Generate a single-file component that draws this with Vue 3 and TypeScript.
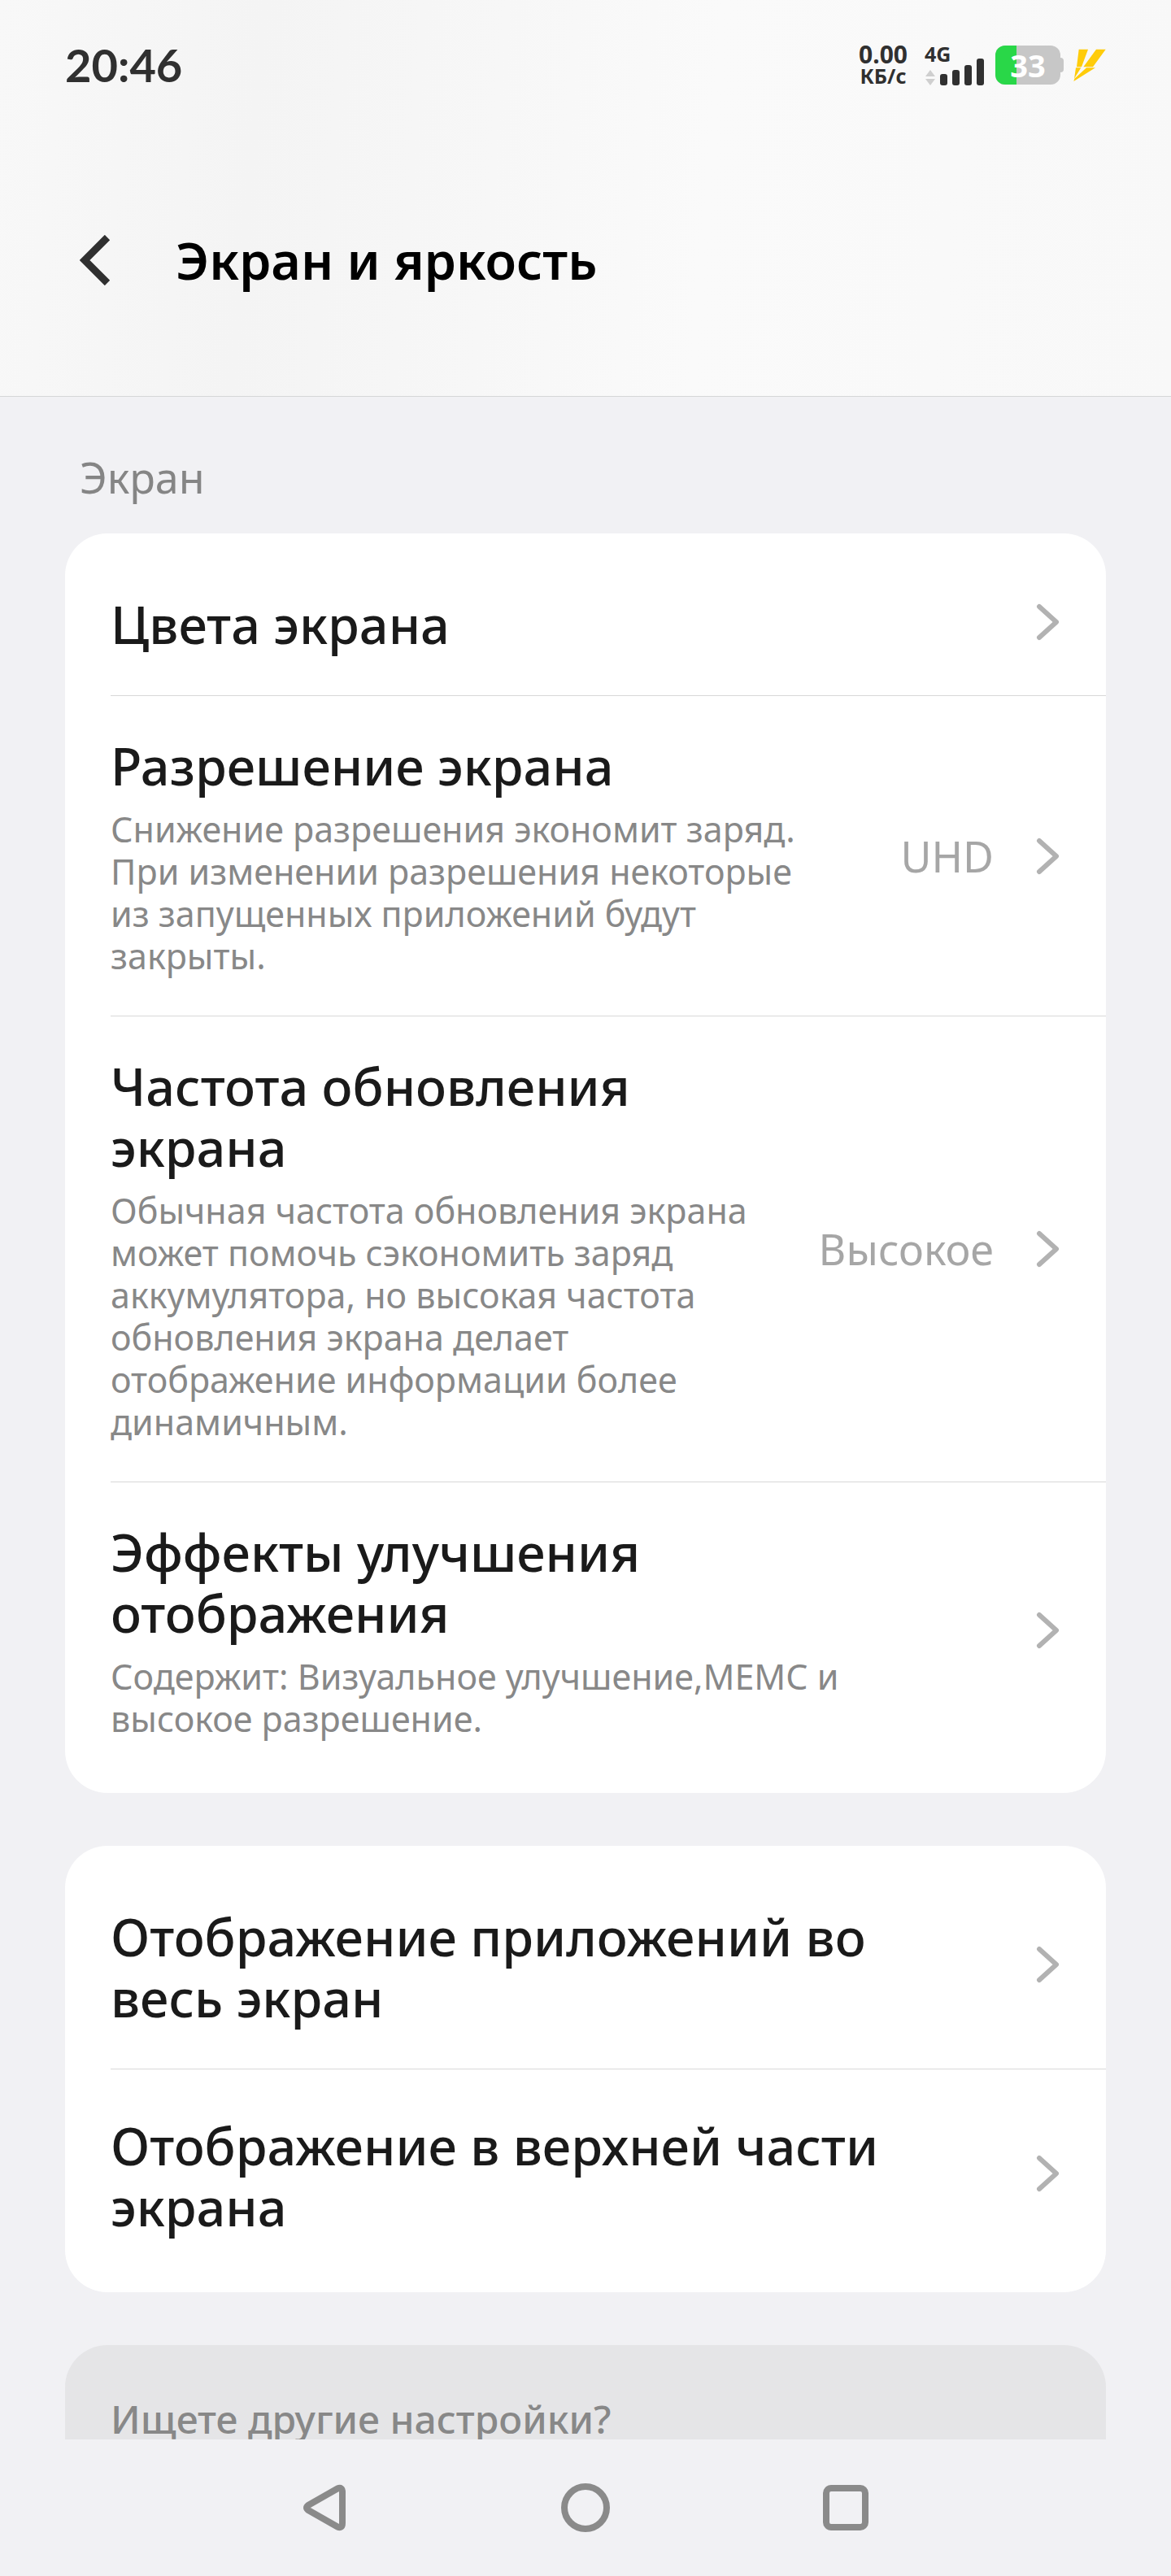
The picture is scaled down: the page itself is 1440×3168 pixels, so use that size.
<script setup lang="ts">
interface SettingRow {
  title: string
  note?: string
  value?: string
}

const groups: SettingRow[][] = [
  [
    { title: 'Цвета экрана' },
    {
      title: 'Разрешение экрана',
      note: 'Снижение разрешения экономит заряд. При изменении разрешения некоторые из запущенных приложений будут закрыты.',
      value: 'UHD',
    },
    {
      title: 'Частота обновления экрана',
      note: 'Обычная частота обновления экрана может помочь сэкономить заряд аккумулятора, но высокая частота обновления экрана делает отображение информации более динамичным.',
      value: 'Высокое',
    },
    {
      title: 'Эффекты улучшения отображения',
      note: 'Содержит: Визуальное улучшение,MEMC и высокое разрешение.',
    },
  ],
  [{ title: 'Отображение приложений во весь экран' }, { title: 'Отображение в верхней части экрана' }],
]

const batteryLevel = 33
</script>

<template>
  <div class="screen">
    <header class="header">
      <div class="status">
        <time class="clock">20:46</time>
        <div class="indicators">
          <div class="speed">
            <span class="speed-value">0.00</span>
            <span class="speed-unit">КБ/с</span>
          </div>
          <div class="network">
            <span class="network-type">4G</span>
            <svg class="signal" width="73" height="34" viewBox="0 0 73 34" aria-hidden="true">
              <path d="M7 15l6 8H1zM7 34l6-8H1z" fill="#cfcfcf" />
              <g fill="#303030">
                <rect x="19" y="20" width="9" height="14" rx="3" />
                <rect x="34" y="15" width="9" height="19" rx="3" />
                <rect x="49" y="9" width="9" height="25" rx="3" />
                <rect x="64" y="1" width="9" height="33" rx="3" />
              </g>
            </svg>
          </div>
          <div class="battery">
            <div class="battery-body">
              <div class="battery-fill" :style="{ width: batteryLevel + '%' }"></div>
              <span class="battery-text">{{ batteryLevel }}</span>
            </div>
            <div class="battery-tip"></div>
          </div>
          <svg class="bolt" width="40" height="40" viewBox="0 0 120 120" aria-hidden="true">
            <path
              d="M20 2H54L30 67H12zM84 2H119L72 67H37zM9 70H28L3 110zM48 70H81L1 120L4 110z"
              fill="#ffcc0a"
            />
          </svg>
        </div>
      </div>
      <div class="title-bar">
        <button class="back" type="button" aria-label="Назад">
          <svg width="38" height="62" viewBox="0 0 38 62" aria-hidden="true">
            <path d="M34 3L6 31l28 28" fill="none" stroke="#303030" stroke-width="9" />
          </svg>
        </button>
        <h1 class="title">Экран и яркость</h1>
      </div>
    </header>

    <main class="content">
      <h2 class="section">Экран</h2>
      <ul v-for="(rows, g) in groups" :key="g" class="card">
        <li v-for="row in rows" :key="row.title" class="item">
          <button class="row" type="button">
            <span class="text" :class="{ detailed: row.note }">
              <span class="name">{{ row.title }}</span>
              <span v-if="row.note" class="note">{{ row.note }}</span>
            </span>
            <span v-if="row.value" class="value">{{ row.value }}</span>
            <svg class="chevron" width="30" height="50" viewBox="0 0 30 50" aria-hidden="true">
              <path
                d="M4 6l21 19L4 44"
                fill="none"
                stroke="#b2b2b2"
                stroke-width="6"
                stroke-linecap="round"
                stroke-linejoin="round"
              />
            </svg>
          </button>
        </li>
      </ul>
      <section class="more">
        <p class="more-title">Ищете другие настройки?</p>
      </section>
    </main>

    <nav class="nav">
      <button type="button" aria-label="Назад">
        <svg width="60" height="60" viewBox="0 0 60 60" aria-hidden="true">
          <path
            d="M9 27L45 6.500Q51 4 51 11V49Q51 56 45 53.500L9 33Q5 30 9 27Z"
            fill="none"
            stroke="#8a8a8a"
            stroke-width="8"
            stroke-linejoin="round"
          />
        </svg>
      </button>
      <button type="button" aria-label="Домой">
        <svg width="60" height="60" viewBox="0 0 60 60" aria-hidden="true">
          <circle cx="30" cy="30" r="26" fill="none" stroke="#8a8a8a" stroke-width="8" />
        </svg>
      </button>
      <button type="button" aria-label="Недавние приложения">
        <svg width="60" height="60" viewBox="0 0 60 60" aria-hidden="true">
          <rect x="6" y="6" width="48" height="48" rx="6" fill="none" stroke="#8a8a8a" stroke-width="8" />
        </svg>
      </button>
    </nav>
  </div>
</template>

<style>
body {
  background: #f1f1f4;
}
</style>

<style scoped>
.screen {
  display: flex;
  flex-direction: column;
  height: 100vh;
  background: #f1f1f4;
  color: #1a1a1a;
  font-family: 'Noto Sans', 'Open Sans', sans-serif;
}

button {
  border: 0;
  margin: 0;
  padding: 0;
  background: none;
  color: inherit;
  font: inherit;
  text-align: left;
  cursor: pointer;
}

svg {
  display: block;
  flex: none;
}

.header {
  flex: none;
  border-bottom: 1px solid #d5d7d7;
  background: linear-gradient(95deg, #f8f8f8 0%, #f4f4f4 22%, #f7f7f7 42%, #fafafa 60%, #f9f9f9 80%, #f8f8f8 100%);
}

.status {
  display: flex;
  justify-content: space-between;
  align-items: center;
  height: 160px;
  padding: 0 80px;
  color: #303030;
}

.clock {
  font-family: Lato, 'Noto Sans', sans-serif;
  font-size: 56px;
  font-weight: 700;
  line-height: 64px;
}

.indicators {
  display: flex;
  align-items: center;
}

.speed {
  display: flex;
  flex-direction: column;
  align-items: center;
  margin-right: 21px;
  font-weight: 700;
}

.speed-value {
  font-size: 30px;
  line-height: 26px;
}

.speed-unit {
  font-size: 25px;
  line-height: 26px;
}

.network {
  display: flex;
  flex-direction: column;
  height: 50px;
  margin-right: 14px;
}

.network-type {
  height: 16px;
  font-size: 25px;
  font-weight: 700;
  line-height: 22px;
}

.battery {
  display: flex;
  align-items: center;
  margin-right: 12px;
}

.battery-body {
  position: relative;
  width: 80px;
  height: 48px;
  border-radius: 12px;
  background: #c7c7c7;
}

.battery-fill {
  height: 100%;
  border-radius: 12px 0 0 12px;
  background: #29d748;
}

.battery-text {
  position: absolute;
  inset: 0;
  color: #fff;
  font-size: 38px;
  font-weight: 700;
  line-height: 48px;
  text-align: center;
}

.battery-tip {
  width: 4px;
  height: 18px;
  border-radius: 0 4px 4px 0;
  background: #c7c7c7;
}

.title-bar {
  display: flex;
  align-items: center;
  gap: 80px;
  height: 327px;
  padding: 0 98px 7px;
  box-sizing: border-box;
}

.title {
  margin: 0;
  color: #000;
  font-size: 63px;
  font-weight: 600;
  line-height: 80px;
}

.content {
  flex: 1;
  min-height: 0;
  overflow: hidden;
  padding: 0 80px;
}

.section {
  margin: 0;
  padding: 63px 18px 33px;
  color: #858585;
  font-size: 52px;
  font-weight: 400;
  line-height: 72px;
}

.card {
  margin: 0 0 65px;
  padding: 18px 0;
  list-style: none;
  border-radius: 52px;
  background: #fff;
}

.item + .item::before {
  content: '';
  display: block;
  height: 1px;
  margin-left: 56px;
  background: #d8d8d8;
}

.row {
  display: flex;
  align-items: center;
  width: 100%;
  padding: 0 56px;
}

.text {
  flex: 1;
  padding: 56px 20px 50px 0;
}

.text.detailed {
  padding: 48px 20px 47px 0;
}

.name,
.note {
  display: block;
}

.name {
  font-size: 63px;
  font-weight: 500;
  line-height: 75px;
}

.note {
  margin-top: 15px;
  color: #888;
  font-size: 43px;
  line-height: 52px;
}

.value {
  min-width: 212px;
  color: #a6a6a6;
  font-size: 52px;
  line-height: 72px;
  text-align: right;
}

.chevron {
  margin-left: 52px;
}

.more {
  height: 400px;
  border-radius: 52px;
  background: #e5e5e7;
}

.more-title {
  margin: 0;
  padding: 55px 56px;
  color: #888;
  font-size: 48px;
  font-weight: 500;
  line-height: 72px;
}

.nav {
  display: grid;
  grid-template-columns: repeat(3, 1fr);
  flex: none;
  height: 168px;
  padding: 0 calc(100% / 6);
}

.nav button {
  display: flex;
  align-items: center;
  justify-content: center;
}
</style>
